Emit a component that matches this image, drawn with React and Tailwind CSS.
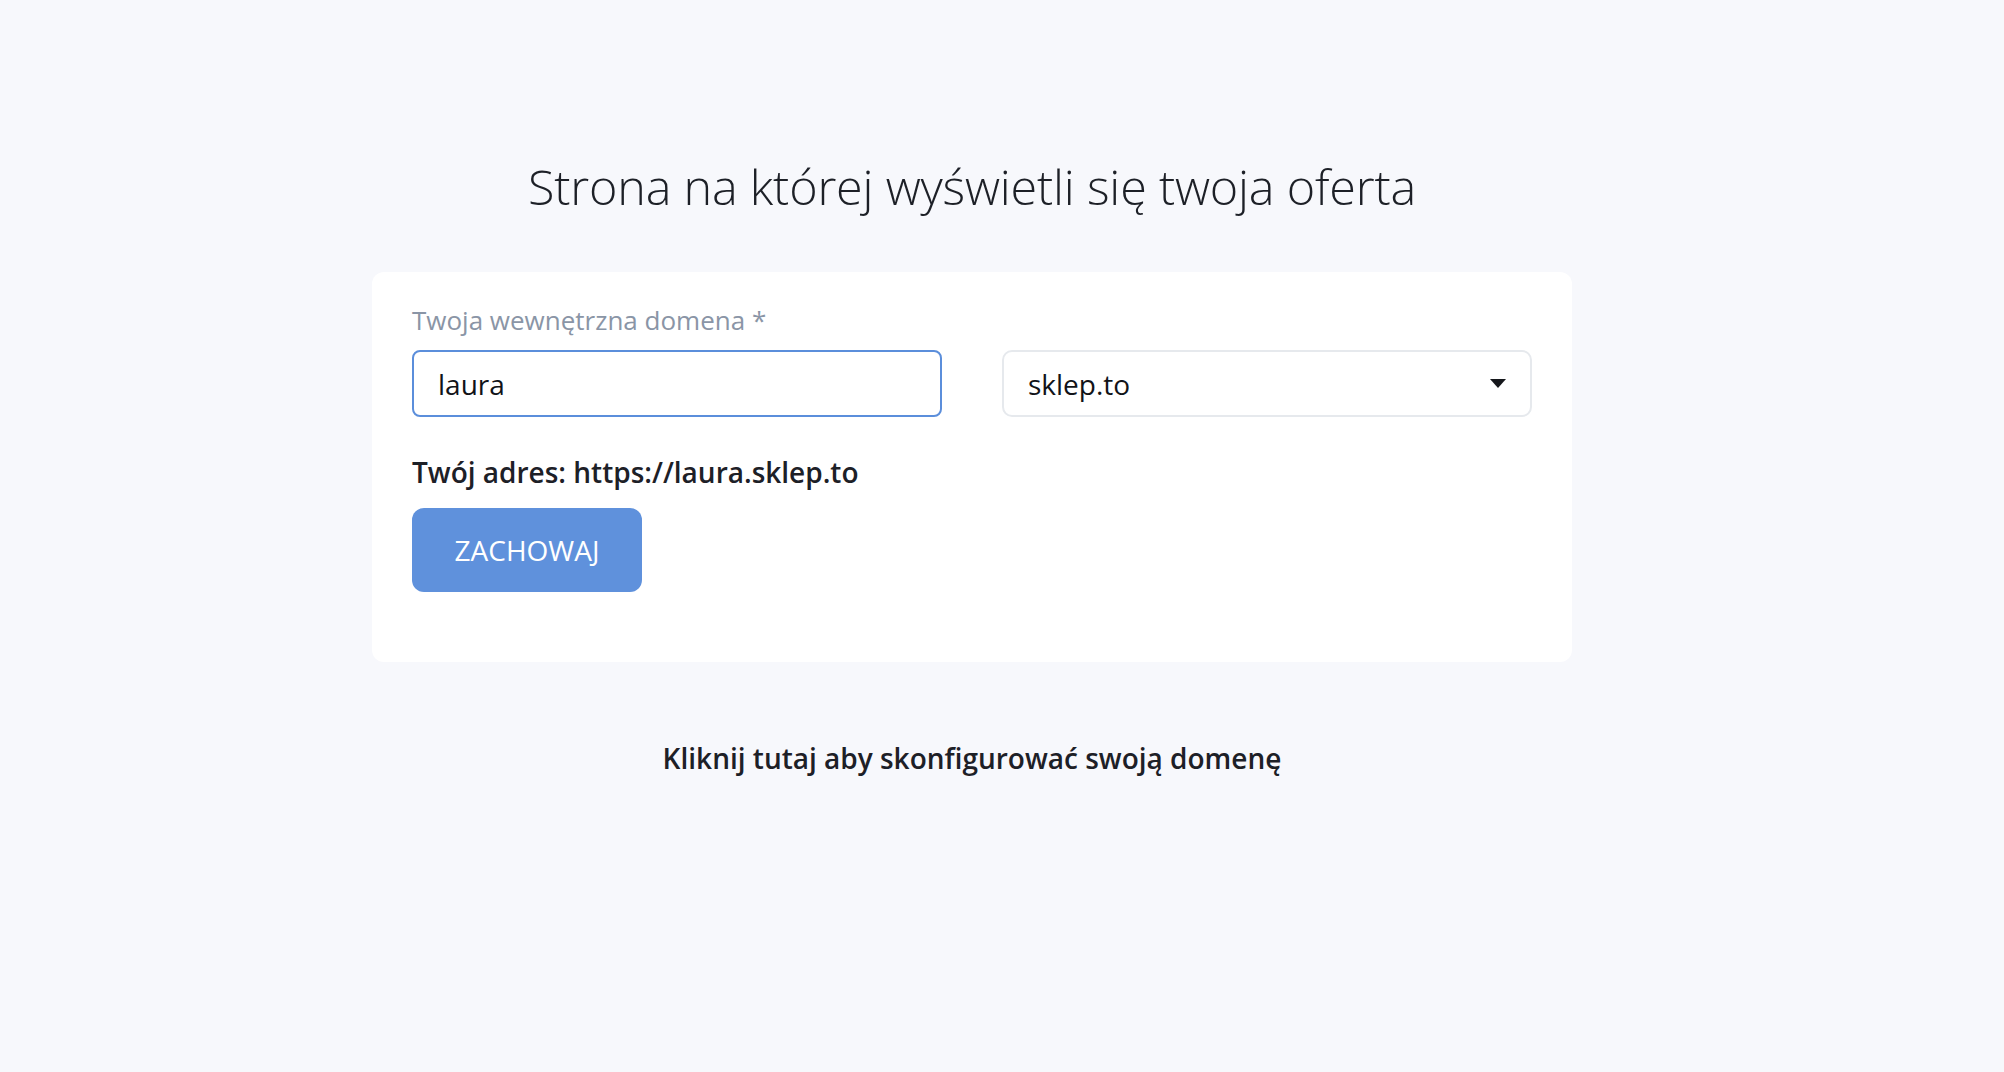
import React from "react";

export default function App() {
  return (
    <div
      className="min-h-[1072px] w-full bg-[#f7f8fc] text-[#1d2027] flex flex-col items-center pr-[60px]"
      style={{ fontFamily: '"Open Sans", "Noto Sans", sans-serif' }}
    >
      <h1 className="mt-[151px] text-[48.5px] leading-[70px] font-light tracking-[-0.2px] text-[#1d2027]">
        Strona na której wyświetli się twoja oferta
      </h1>
      <div className="mt-[51px] w-[1200px] bg-white rounded-[12px] px-[40px] pt-[30px] pb-[70px]">
        <div className="grid grid-cols-2 gap-x-[60px]">
          <div className="flex flex-col">
            <label className="text-[26px] leading-[36px] text-[#8a95a6]">
              Twoja wewnętrzna domena *
            </label>
            <div className="mt-[12px] h-[67px] rounded-[8px] border-2 border-[#5b8edb] flex items-center px-[24px]">
              <span className="text-[28px] text-[#111318]">laura</span>
            </div>
          </div>
          <div className="flex flex-col justify-end">
            <div className="h-[67px] rounded-[10px] border-2 border-[#e6e9ed] flex items-center justify-between pl-[24px] pr-[24px]">
              <span className="text-[28px] text-[#111318]">sklep.to</span>
              <svg width="16" height="9" viewBox="0 0 16 9">
                <path d="M0 0 H16 L8 9 Z" fill="#15171b" />
              </svg>
            </div>
          </div>
        </div>
        <div className="mt-[37px] text-[28px] leading-[36px] font-semibold text-[#1d2027]">
          Twój adres: https://laura.sklep.to
        </div>
        <button className="mt-[18px] w-[230px] h-[84px] rounded-[12px] bg-[#5f91dc] text-white text-[28px] font-normal">
          ZACHOWAJ
        </button>
      </div>
      <div className="mt-[78px] text-[28px] leading-[36px] font-semibold text-[#1d2027]">
        Kliknij tutaj aby skonfigurować swoją domenę
      </div>
    </div>
  );
}
